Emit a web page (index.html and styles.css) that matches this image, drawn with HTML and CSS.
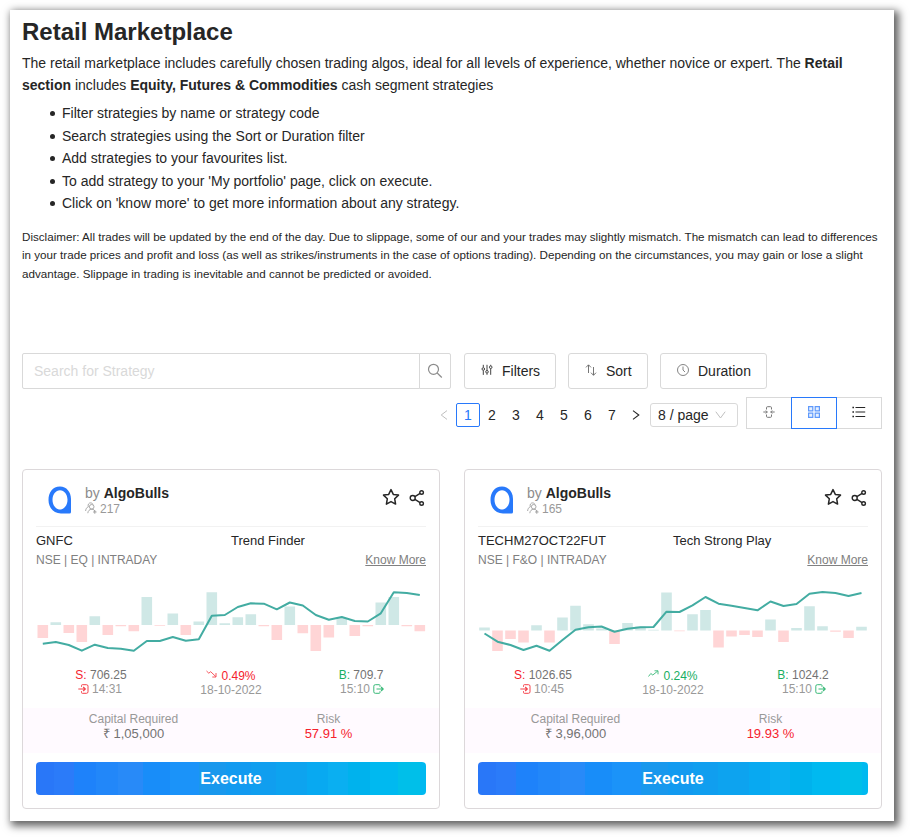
FILE: index.html
```html
<!DOCTYPE html>
<html lang="en">
<head>
<meta charset="utf-8">
<title>Retail Marketplace</title>
<link rel="stylesheet" href="styles.css">
</head>
<body>
<svg class="sprite" width="0" height="0">
  <symbol id="logo" viewBox="0 0 24 28"><path fill="#2879fb" fill-rule="evenodd" d="M12 .5C18.500.5 23 6 23 13v13q0 1.500-1.500 1.500H13C5.500 27.500.5 21.500.5 14S4.500.5 12 .5ZM12 4.200C7.700 4.200 4.500 8.500 4.500 13.800S7.700 23.500 12 23.500s7.500-4.400 7.500-9.700S16.300 4.200 12 4.200Z"/></symbol>
  <symbol id="users" viewBox="0 0 12 12"><g fill="none" stroke="currentColor" stroke-width=".85"><circle cx="6.700" cy="4.800" r="2.300"/><path d="M2.800 11.200c.2-2.300 1.700-4 3.900-4 1.900 0 3.300 1.200 3.300 2.600M8 10h3.600M9.800 8.200v3.600M3.300 4.800C2.600 2.500 3.800.9 5.500.9 6.700.9 7.600 1.500 8 2.400M.6 9c.2-2.200 1.200-3.700 2.800-4.200"/></g></symbol>
  <symbol id="star" viewBox="0 0 18 18"><path fill="none" stroke="currentColor" stroke-width="1.500" stroke-linejoin="round" d="m9 1.600 2.300 4.800 5.200.7-3.800 3.700.9 5.300L9 13.600l-4.600 2.500.9-5.300L1.500 7.100l5.200-.7Z"/></symbol>
  <symbol id="share" viewBox="0 0 16 18"><g fill="none" stroke="currentColor" stroke-width="1.400"><circle cx="3.700" cy="9" r="2.500"/><circle cx="12.600" cy="3.500" r="1.800"/><circle cx="12.600" cy="14.500" r="1.800"/><path d="m5.900 7.600 5.200-3.200M5.900 10.400l5.200 3.200"/></g></symbol>
  <symbol id="enter" viewBox="0 0 11 10"><path fill="none" stroke="currentColor" d="M3.500 2.800V1.500q0-.8.800-.8h4.200q1.500 0 1.500 1.500v5.600q0 1.500-1.500 1.500H4.300q-.8 0-.8-.8V7.200"/><path fill="none" stroke="currentColor" stroke-width="1.200" d="M.3 5h6.900M5.200 3 7.300 5 5.200 7"/></symbol>
  <symbol id="leave" viewBox="0 0 11 10"><path fill="none" stroke="currentColor" d="M7 2.800V1.500q0-.8-.8-.8H2.300Q.8.700.8 2.200v5.600q0 1.500 1.500 1.500h3.900q.8 0 .8-.8V7.200"/><path fill="none" stroke="currentColor" stroke-width="1.200" d="M3.500 5h6.700M8.100 3 10.200 5 8.100 7"/></symbol>
  <symbol id="fall" viewBox="0 0 11 8"><path fill="none" stroke="currentColor" stroke-width=".9" d="m.5 1 2.300 2.200L4.700 1.700 9.800 6.600M10 3v4H6.300"/></symbol>
  <symbol id="rise" viewBox="0 0 11 8"><path fill="none" stroke="currentColor" stroke-width=".9" d="m.5 6.500 2.300-3 2 1.500L9.800 1M6.500.8H10v3.500"/></symbol>
</svg>

<main class="panel">
  <h1>Retail Marketplace</h1>
  <p class="intro">The retail marketplace includes carefully chosen trading algos, ideal for all levels of experience, whether novice or expert. The <b>Retail section</b> includes <b>Equity, Futures &amp; Commodities</b> cash segment strategies</p>
  <ul class="tips">
    <li>Filter strategies by name or strategy code</li>
    <li>Search strategies using the Sort or Duration filter</li>
    <li>Add strategies to your favourites list.</li>
    <li>To add strategy to your 'My portfolio' page, click on execute.</li>
    <li>Click on 'know more' to get more information about any strategy.</li>
  </ul>
  <p class="disclaimer">Disclaimer: All trades will be updated by the end of the day. Due to slippage, some of our and your trades may slightly mismatch. The mismatch can lead to differences in your trade prices and profit and loss (as well as strikes/instruments in the case of options trading). Depending on the circumstances, you may gain or lose a slight advantage. Slippage in trading is inevitable and cannot be predicted or avoided.</p>

  <div class="toolbar">
    <div class="search">
      <input type="text" placeholder="Search for Strategy" aria-label="Search for Strategy">
      <button aria-label="Search"><svg width="16" height="16" viewBox="0 0 16 16" fill="none" stroke="#8c8c8c" stroke-width="1.200"><circle cx="6.500" cy="6.300" r="5"/><path d="m10.200 10 4.600 4.500"/></svg></button>
    </div>
    <button class="tool filters"><svg width="12" height="12" viewBox="0 0 12 12" fill="none" stroke="#444"><path d="M2.300.8v2.700M2.300 6.400v4.500M6 .8v5.500M6 9.200v1.600M9.700.8v1M9.700 4.600v6.200"/><circle cx="2.300" cy="5" r="1.300"/><circle cx="6" cy="7.800" r="1.300"/><circle cx="9.700" cy="3.200" r="1.300"/></svg>Filters</button>
    <button class="tool sort"><svg width="12" height="12" viewBox="0 0 12 12" fill="none" stroke="#666" stroke-width=".9"><path d="M3.500 9V1M1 3.400 3.500.8 6 3.400M8.500 3v8.200M6 8.700l2.500 2.600L11 8.700"/></svg>Sort</button>
    <button class="tool duration"><svg width="12" height="12" viewBox="0 0 12 12" fill="none" stroke="#666" stroke-width=".8"><circle cx="6" cy="6" r="5.500"/><path d="M6 2.500V6l2 2"/></svg>Duration</button>
  </div>

  <div class="paging">
    <span class="arrow off"><svg width="8" height="10" viewBox="0 0 8 10" fill="none" stroke="#bfbfbf"><path d="M7 .6 1.200 5 7 9.400"/></svg></span>
    <span class="page current">1</span><span class="page">2</span><span class="page">3</span><span class="page">4</span><span class="page">5</span><span class="page">6</span><span class="page">7</span>
    <span class="arrow"><svg width="8" height="10" viewBox="0 0 8 10" fill="none" stroke="#262626" stroke-width="1.100"><path d="M1 .6 6.800 5 1 9.400"/></svg></span>
    <span class="size">8 / page<svg width="11" height="8" viewBox="0 0 11 8" fill="none" stroke="#bfbfbf"><path d="m.8.700 4.700 6.300L10.200.7"/></svg></span>
    <div class="views">
      <button aria-label="Compact"><svg width="12" height="12" viewBox="0 0 12 12" fill="none" stroke="#777"><path d="M3.500 3.500V1.700q0-1 1-1h3q1 0 1 1v1.800M3.500 8.500v1.800q0 1 1 1h3q1 0 1-1V8.500M.3 6h4M7.700 6h4M2.800 4.500 4.300 6 2.800 7.500M9.200 4.500 7.700 6l1.500 1.500"/></svg></button>
      <button class="on" aria-label="Grid"><svg width="12" height="12" viewBox="0 0 12 12" fill="#e6f0ff" stroke="#5f99fb" stroke-width="1.200"><path d="M.6.600h4.200v4.200H.6zM7.200.6h4.200v4.200H7.200zM.6 7.200h4.200v4.200H.6zM7.200 7.200h4.200v4.200H7.200z"/></svg></button>
      <button aria-label="List"><svg width="14" height="12" viewBox="0 0 14 12" fill="none" stroke="#262626" stroke-width="1.200"><path d="M3.500 1.500h9.700M3.500 6h9.700M3.500 10.500h9.700"/><path stroke-width="1.600" d="M.4 1.500H2M.4 6H2M.4 10.500H2"/></svg></button>
    </div>
  </div>

  <div class="cards">
    <article class="card">
      <header>
        <svg class="logo"><use href="#logo"/></svg>
        <div class="author"><div class="by">by <b>AlgoBulls</b></div><div class="followers"><svg width="12" height="12"><use href="#users"/></svg>217</div></div>
        <svg class="star"><use href="#star"/></svg><svg class="share"><use href="#share"/></svg>
      </header>
      <div class="names"><span>GNFC</span><span>Trend Finder</span></div>
      <div class="meta"><span>NSE | EQ | INTRADAY</span><a>Know More</a></div>
      <svg class="chart" data-chart="gnfc" viewBox="0 0 390 70"></svg>
      <div class="stats">
        <div><p><span class="red">S:</span> 706.25</p><p class="time"><svg class="red" width="11" height="10"><use href="#enter"/></svg>14:31</p></div>
        <div class="middle"><p class="red"><svg width="11" height="8"><use href="#fall"/></svg>0.49%</p><p class="time">18-10-2022</p></div>
        <div><p><span class="green">B:</span> 709.7</p><p class="time">15:10<svg class="green" width="11" height="10"><use href="#leave"/></svg></p></div>
      </div>
      <div class="capital"><div><p>Capital Required</p><p class="value">₹ 1,05,000</p></div><div><p>Risk</p><p class="value red">57.91 %</p></div></div>
      <button class="execute">Execute</button>
    </article>
    <article class="card">
      <header>
        <svg class="logo"><use href="#logo"/></svg>
        <div class="author"><div class="by">by <b>AlgoBulls</b></div><div class="followers"><svg width="12" height="12"><use href="#users"/></svg>165</div></div>
        <svg class="star"><use href="#star"/></svg><svg class="share"><use href="#share"/></svg>
      </header>
      <div class="names"><span>TECHM27OCT22FUT</span><span>Tech Strong Play</span></div>
      <div class="meta"><span>NSE | F&amp;O | INTRADAY</span><a>Know More</a></div>
      <svg class="chart" data-chart="techm" viewBox="0 0 390 70"></svg>
      <div class="stats">
        <div><p><span class="red">S:</span> 1026.65</p><p class="time"><svg class="red" width="11" height="10"><use href="#enter"/></svg>10:45</p></div>
        <div class="middle"><p class="green"><svg width="11" height="8"><use href="#rise"/></svg>0.24%</p><p class="time">18-10-2022</p></div>
        <div><p><span class="green">B:</span> 1024.2</p><p class="time">15:10<svg class="green" width="11" height="10"><use href="#leave"/></svg></p></div>
      </div>
      <div class="capital"><div><p>Capital Required</p><p class="value">₹ 3,96,000</p></div><div><p>Risk</p><p class="value red">19.93 %</p></div></div>
      <button class="execute">Execute</button>
    </article>
  </div>
</main>
<script src="charts.js"></script>
</body>
</html>
```
FILE: styles.css
```css
* { box-sizing: border-box; }
body {
  margin: 0;
  height: 837px;
  padding: 10px 0 0 10px;
  background: #fff;
  color: #262626;
  font-family: "Liberation Sans", Arial, sans-serif;
  font-size: 14px;
}
.sprite { position: absolute; }
svg { display: block; flex: none; }
p, h1, ul { margin: 0; }
button { font: inherit; color: inherit; background: #fff; padding: 0; border: 1px solid #d9d9d9; }

.panel {
  width: 884px;
  height: 811px;
  padding: 5px 12px 0;
  background: #fff;
  box-shadow: 3px 3px 8px 2px rgba(0, 0, 0, .62);
}
h1 { font-size: 24px; line-height: 34px; }
.intro { margin-top: 3px; line-height: 22px; }
.tips { margin-top: 6px; padding-left: 28px; line-height: 22.5px; list-style: none; }
.tips li { display: flex; align-items: center; gap: 7px; }
.tips li::before { content: ""; width: 5px; height: 5px; margin-top: 1px; border-radius: 50%; background: #262626; }
.disclaimer { margin-top: 13.2px; font-size: 11.63px; line-height: 18.5px; }

.toolbar { display: flex; margin-top: 69.5px; height: 36px; }
.search { display: flex; width: 429px; margin-right: 13px; }
.search input {
  flex: 1;
  min-width: 0;
  padding: 0 11px;
  border: 1px solid #d9d9d9;
  border-radius: 2px 0 0 2px;
  font: inherit;
}
.search input::placeholder { color: #d9d9d9; opacity: 1; }
.search button {
  display: flex;
  align-items: center;
  justify-content: center;
  width: 32px;
  margin-left: -1px;
  border-radius: 0 2px 2px 0;
}
.tool {
  display: flex;
  align-items: center;
  gap: 9px;
  padding-left: 16px;
  border-radius: 3px;
  margin-right: 12px;
}
.tool svg { margin-top: -2px; }
.filters { width: 92px; }
.sort { width: 80px; }
.duration { width: 107px; }

.paging { display: flex; justify-content: flex-end; align-items: center; height: 32px; margin-top: 8px; }
.paging > span { margin-top: 4px; }
.page { width: 24px; height: 24px; line-height: 24px; text-align: center; }
.current { line-height: 22px; border: 1px solid #2879fb; border-radius: 2px; color: #2879fb; }
.arrow { width: 24px; display: flex; justify-content: center; }
.size {
  display: flex;
  align-items: center;
  justify-content: space-between;
  width: 88px;
  height: 24px;
  margin: 0 8px 0 2px;
  padding: 0 11px 0 7px;
  border: 1px solid #d9d9d9;
  border-radius: 3px;
}
.views { display: flex; }
.views button {
  display: flex;
  justify-content: center;
  align-items: center;
  width: 46px;
  height: 32px;
  padding-bottom: 2px;
}
.views button + button { border-left: 0; width: 45px; }
.views .on { margin-left: -1px; }
.views button.on { width: 46px; border: 1px solid #2879fb; }

.cards { display: grid; grid-template-columns: 418px 418px; gap: 24px; margin-top: 40px; }
.card { height: 340px; padding: 0 13px; border: 1px solid #dcd8da; border-radius: 4px; }
.card header { display: flex; height: 57px; border-bottom: 1px solid #f2f2f2; color: #262626; }
.logo { width: 24px; height: 28px; margin: 16px 13px 0 12px; }
.author { flex: 1; padding-top: 15px; }
.by { color: #8c8c8c; line-height: 17px; }
.by b { color: #262626; }
.followers { display: flex; gap: 3px; font-size: 12px; line-height: 14px; color: #999; }
.star { width: 18px; height: 18px; margin: 18px 9px 0 0; }
.share { width: 16px; height: 18px; margin: 19px 1px 0 0; }
.names { display: grid; grid-template-columns: 1fr 1fr; margin-top: 6px; font-size: 13px; line-height: 16px; }
.meta { display: flex; justify-content: space-between; margin-top: 3px; font-size: 12px; line-height: 16px; color: #808080; }
.meta a { text-decoration: underline; }
.chart { width: 390px; height: 70px; margin-top: 17px; }
.up { fill: none; stroke: #cfe8e6; stroke-width: 10.600; }
.down { fill: none; stroke: #ffd5d6; stroke-width: 10.600; }
.line { fill: none; stroke: #43aca2; stroke-width: 2; stroke-linejoin: round; }

.stats { display: grid; grid-template-columns: repeat(3, 1fr); margin-top: 13px; font-size: 12px; line-height: 14px; text-align: center; color: #737373; }
.stats p { display: flex; justify-content: center; align-items: center; white-space: pre; }
.stats .time { gap: 3px; color: #999; }
.stats > :first-child .time { position: relative; left: -1px; }
.stats > :last-child .time { position: relative; left: 1px; }
.stats .middle { padding-top: 1px; }
.middle svg { margin: -3px 4px 0 0; }
.stats .red, .red { color: #f5222d; }
.stats .green, .green { color: #18ae62; }
.stats svg { opacity: .85; }

.capital {
  display: grid;
  grid-template-columns: 1fr 1fr;
  height: 45px;
  margin: 11px -13px 0;
  padding: 4px 13px 0;
  background: #fffaff;
  text-align: center;
  font-size: 12px;
  line-height: 14px;
  color: #999;
}
.value { font-size: 13px; line-height: 15px; color: #737373; }
.value.red { color: #f5222d; }
.execute {
  display: block;
  width: 390px;
  height: 33px;
  margin-top: 9px;
  padding-top: 2px;
  border: 0;
  border-radius: 4px;
  color: #fff;
  font-size: 16px;
  font-weight: bold;
  background: linear-gradient(90deg, #2977f8 0 18px, #2b7bf9 18px 38px, #1e82fa 38px 60px, #2287f9 60px 82px, #288af8 82px 107px, #188df9 107px 134px, #1b93f9 134px 163px, #1998ed 163px 190px, #129af0 190px 215px, #109eef 215px 240px, #0da3ef 240px 271px, #08a9f1 271px 292px, #0aaff1 292px 312px, #00b2ed 312px 334px, #00b9f0 334px 362px, #00bfe9 362px 384px, #00b9f0 384px);
}
```
FILE: charts.js
```js
const charts = {
  gnfc: {
    start: 6.8, base: 40,
    bars: [-13, 2.7, -8, -17, 8.8, -10, -1.300, -6.3, 28, -.7, 11.5, -10, 3.5, 32.7, 1.700, 7.7, 10.800, -1.300, -15, 18.500, -8.300, -26, -12.500, 7, -11, -1.300, 22.500, 28, -1.300, -6.300],
    line: [58.7, 57, 60, 65.7, 59.700, 63, 63.700, 65.700, 56, 56, 52, 55.700, 54.300, 30.700, 30, 22, 18.300, 18.700, 24.300, 17.500, 20.500, 30, 34.700, 32, 36, 36.500, 28.300, 7.200, 8, 10]
  },
  techm: {
    start: 6.5, base: 45.5,
    bars: [3, -20.500, -8.500, -12, 5.300, -12, 13, 24.700, 6.300, 2, -13.500, 7.500, 4, .7, 38, -.7, 16.300, 20.500, -17, -6, -4.500, -6.500, 11, -11.500, 2.500, 24.300, 4.200, -1.300, -7.500, 3.700],
    line: [48.500, 56.700, 60, 65, 60.700, 65.700, 55, 44.700, 42.300, 41.500, 46.700, 43.700, 42.300, 42, 26.700, 27, 20.300, 12, 18.700, 20.700, 23, 25.300, 16.500, 21, 19, 8.700, 7, 8, 11, 8]
  }
};
const step = 13;

document.querySelectorAll('[data-chart]').forEach(svg => {
  const { start, base, bars, line } = charts[svg.dataset.chart];
  const x = i => start + i * step;
  const path = keep => bars.map((h, i) => keep(h) ? `M${x(i)} ${base}v${-h}` : '').join('');
  svg.innerHTML = `<path class="up" d="${path(h => h > 0)}"/><path class="down" d="${path(h => h < 0)}"/>` +
    `<polyline class="line" points="${line.map((y, i) => `${x(i)},${y}`).join(' ')}"/>`;
});
```
